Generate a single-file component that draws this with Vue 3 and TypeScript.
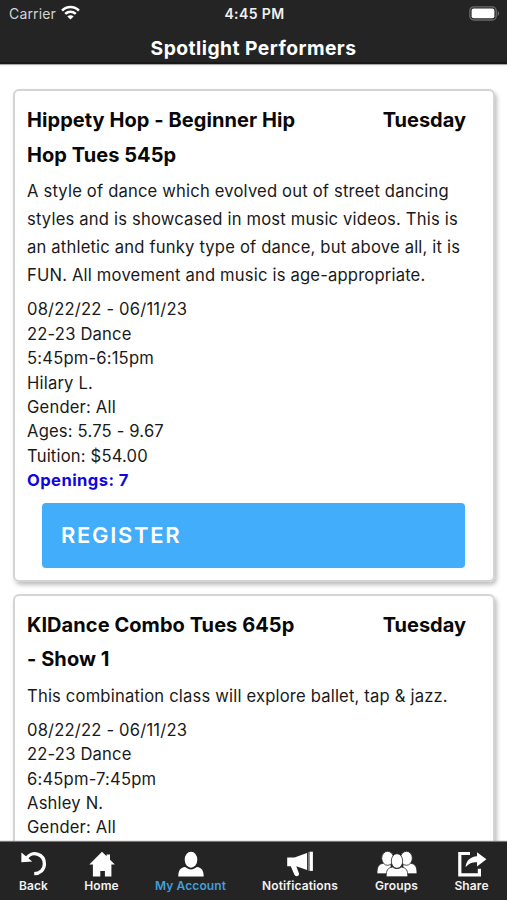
<script setup lang="ts">
interface DanceClass {
  title: string
  day: string
  description: string
  details: string[]
  openings: number
}

const classes: DanceClass[] = [
  {
    title: 'Hippety Hop - Beginner Hip Hop Tues 545p',
    day: 'Tuesday',
    description:
      'A style of dance which evolved out of street dancing styles and is showcased in most music videos. This is an athletic and funky type of dance, but above all, it is FUN. All movement and music is age-appropriate.',
    details: ['08/22/22 - 06/11/23', '22-23 Dance', '5:45pm-6:15pm', 'Hilary L.', 'Gender: All', 'Ages: 5.75 - 9.67', 'Tuition: $54.00'],
    openings: 7,
  },
  {
    title: 'KIDance Combo Tues 645p - Show 1',
    day: 'Tuesday',
    description: 'This combination class will explore ballet, tap & jazz.',
    details: ['08/22/22 - 06/11/23', '22-23 Dance', '6:45pm-7:45pm', 'Ashley N.', 'Gender: All'],
    openings: 0,
  },
]
</script>

<template>
  <div class="screen">
    <header class="header">
      <div class="status">
        <div class="carrier">
          <span>Carrier</span>
          <svg class="wifi" width="19" height="15" viewBox="0 0 18 14">
            <g fill="none" stroke="#fff" stroke-width="2.5">
              <path d="M1 5.2C5.5.7 12.5.7 17 5.2" />
              <path d="M4 8.3c2.9-2.7 7.1-2.7 10 0" />
            </g>
            <path fill="#fff" d="M6 10.7c1.7-1.5 4.3-1.5 6 0l-3 3z" />
          </svg>
        </div>
        <div class="clock">4:45 PM</div>
        <svg class="battery" width="31" height="15" viewBox="0 0 31 15">
          <rect x=".8" y=".8" width="26.4" height="13.2" rx="4" fill="none" stroke="#69696c" stroke-width="1.3" />
          <rect x="2.6" y="2.6" width="22.8" height="9.6" rx="2" fill="#fff" />
          <path d="M28.6 5c2 .7 2 4.2 0 5z" fill="#69696c" />
        </svg>
      </div>
      <h1 class="heading">Spotlight Performers</h1>
    </header>

    <main class="list">
      <article v-for="item in classes" :key="item.title" class="card">
        <div class="top">
          <h2 class="title">{{ item.title }}</h2>
          <div class="day">{{ item.day }}</div>
        </div>
        <p class="description">{{ item.description }}</p>
        <ul class="details">
          <li v-for="line in item.details" :key="line">{{ line }}</li>
          <li v-if="item.openings" class="openings">Openings: {{ item.openings }}</li>
        </ul>
        <button v-if="item.openings" class="register" type="button">REGISTER</button>
      </article>
    </main>

    <nav class="tabs">
      <a class="tab back">
        <svg width="28" height="27" viewBox="0 0 28 27">
          <path d="M6.5 8.4C11.500 0 24.400 3.400 24.400 14c0 5.700-4.600 9.500-10.200 9.700" fill="none" stroke="#fff" stroke-width="3.3" />
          <path d="M1.4 2.500v9.800l10.800-.8z" fill="#fff" />
        </svg>
        <span>Back</span>
      </a>
      <a class="tab home">
        <svg width="28" height="27" viewBox="0 0 28 27">
          <path d="M14 1.800L18.600 6.300V4.400h3.400v5.300l4.800 4.800h-3.400V26.400h-6.500v-5.500h-4.600v5.500H4.900V14.500H1.300z" fill="#fff" />
        </svg>
        <span>Home</span>
      </a>
      <a class="tab account">
        <svg width="28" height="27" viewBox="0 0 28 27">
          <ellipse cx="14" cy="9.700" rx="6.300" ry="8" fill="#fff" />
          <path d="M1.300 26.500c0-5.500 1.700-8.900 7-9.400 3.400 3.100 8 3.100 11.400 0 5.300.5 7 3.900 7 9.400z" fill="#fff" />
        </svg>
        <span>My Account</span>
      </a>
      <a class="tab notifications">
        <svg width="28" height="27" viewBox="0 0 28 27">
          <path d="M1.200 7.400h7.300L21 3v17L10.300 16.200l2.600 7c.8 2.800-3.300 4.200-4.500 1.600L4.800 16.300H1.200z" fill="#fff" />
          <path d="M22.300 2.200v18.500" stroke="#999" stroke-width=".9" />
          <path d="M25.200 1.700v19.200" stroke="#fff" stroke-width="3.400" />
        </svg>
        <span>Notifications</span>
      </a>
      <a class="tab groups">
        <svg width="40" height="27" viewBox="0 0 40 27">
          <g fill="#fff" stroke="#242424" stroke-width=".8">
            <path d="M0 23.800c0-7 1.500-9.500 6-10.500h8v10.500zM40 23.800c0-7-1.500-9.500-6-10.500h-8v10.500z" />
            <ellipse cx="10.600" cy="8.300" rx="5.900" ry="7" />
            <ellipse cx="29.400" cy="8.300" rx="5.900" ry="7" />
            <path d="M9.200 26.800c0-6.500 1.400-9 6.400-9.800 2.600 2 6.200 2 8.800 0 5 .8 6.400 3.300 6.400 9.800z" />
            <ellipse cx="20" cy="11" rx="5.700" ry="7.300" />
          </g>
        </svg>
        <span>Groups</span>
      </a>
      <a class="tab share">
        <svg width="30" height="27" viewBox="0 0 30 27">
          <path d="M13 3.500H2.800v21.300h19.600v-6" fill="none" stroke="#fff" stroke-width="3.200" />
          <path d="M20 2.300l9.400 6.900-9.400 7.200v-4.100c-5 0-8.400 1.300-11.400 5 .2-6.300 4.900-10.700 11.400-11z" fill="#fff" />
        </svg>
        <span>Share</span>
      </a>
    </nav>
  </div>
</template>

<style>
body {
  margin: 0;
  background: #fff;
}
</style>

<style scoped>
.screen {
  display: flex;
  flex-direction: column;
  width: 507px;
  height: 900px;
  overflow: hidden;
  background: #fff;
  color: #1a1a1a;
  font-family: Inter, "Liberation Sans", sans-serif;
}
.header {
  flex: none;
  box-sizing: border-box;
  height: 64px;
  background: #242424;
  border-bottom: 2px solid #181818;
  box-shadow: 0 1px 1px #aaa;
  color: #fff;
}
.status {
  display: grid;
  grid-template-columns: 1fr auto 1fr;
  align-items: center;
  height: 27px;
  padding: 0 7px 0 9px;
}
.carrier {
  display: flex;
  align-items: center;
  gap: 5px;
  color: #d4d4d4;
  font-size: 14px;
  letter-spacing: 0.15px;
}
.wifi {
  margin-top: -2px;
}
.clock {
  color: #f0f0f0;
  font-size: 14px;
  font-weight: 600;
  letter-spacing: 0.4px;
}
.battery {
  justify-self: end;
  margin-top: -1px;
}
.heading {
  margin: 9px 0 0;
  font-size: 19.3px;
  font-weight: 700;
  line-height: 25px;
  letter-spacing: 0.45px;
  text-align: center;
}
.list {
  flex: 1;
  min-height: 0;
  overflow: hidden;
  padding: 25px 12px 0 13px;
}
.card {
  box-sizing: border-box;
  margin-bottom: 12px;
  padding: 12px 27px 12px 12px;
  border: 2px solid #d4d4d4;
  border-radius: 6px;
  box-shadow: 2px 3px 4px rgba(0, 0, 0, 0.25);
}
.top {
  display: flex;
  align-items: flex-start;
  justify-content: space-between;
  color: #080808;
  font-size: 20px;
  font-weight: 700;
  line-height: 34.5px;
}
.title {
  width: 275px;
  margin: 0;
  font: inherit;
  letter-spacing: 0.06px;
}
.description {
  width: 445px;
  margin: 5px 0 0;
  font-size: 16.6px;
  line-height: 28.1px;
  letter-spacing: 0.18px;
}
.details {
  margin: 8px 0 0;
  padding: 0;
  list-style: none;
  font-size: 16.6px;
  line-height: 24.4px;
  letter-spacing: 0.18px;
}
.openings {
  color: #1206de;
  font-weight: 700;
  letter-spacing: 0.42px;
}
.register {
  display: block;
  box-sizing: border-box;
  width: 423px;
  height: 65px;
  margin: 10px 0 0 15px;
  padding: 0 19px;
  border: 0;
  border-radius: 4px;
  background: #41adfb;
  color: #fff;
  font: 600 22px Inter, sans-serif;
  letter-spacing: 1.7px;
  text-align: left;
}
.tabs {
  position: relative;
  display: flex;
  flex: none;
  box-sizing: border-box;
  height: 58px;
  padding-top: 8px;
  background: #242424;
  box-shadow: 0 -1px 1px #777;
  color: #f2f2f2;
}
.tab {
  display: flex;
  flex-direction: column;
  align-items: center;
  font-size: 12px;
  font-weight: 600;
  line-height: 17px;
  letter-spacing: 0.12px;
  white-space: nowrap;
}
.back {
  width: 67px;
}
.home {
  width: 69px;
}
.account {
  width: 109px;
  color: #419fdb;
}
.notifications {
  width: 110px;
}
.groups {
  width: 83px;
}
.share {
  width: 67px;
}
</style>
